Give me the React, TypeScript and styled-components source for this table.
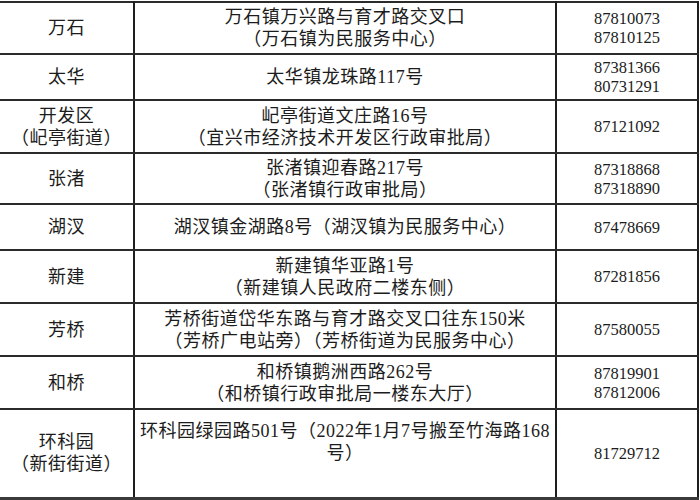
import * as React from "react";
import styled, { createGlobalStyle } from "styled-components";

type Office = {
  name: string[];
  address: string[];
  phones: string[];
  height: number;
  extraLine?: boolean;
};

const OFFICES: Office[] = [
  {
    name: ["万石"],
    address: ["万石镇万兴路与育才路交叉口", "（万石镇为民服务中心）"],
    phones: ["87810073", "87810125"],
    height: 52,
  },
  {
    name: ["太华"],
    address: ["太华镇龙珠路117号"],
    phones: ["87381366", "80731291"],
    height: 46,
  },
  {
    name: ["开发区", "（屺亭街道）"],
    address: ["屺亭街道文庄路16号", "（宜兴市经济技术开发区行政审批局）"],
    phones: ["87121092"],
    height: 53,
  },
  {
    name: ["张渚"],
    address: ["张渚镇迎春路217号", "（张渚镇行政审批局）"],
    phones: ["87318868", "87318890"],
    height: 51,
  },
  {
    name: ["湖汊"],
    address: ["湖汊镇金湖路8号（湖汊镇为民服务中心）"],
    phones: ["87478669"],
    height: 46,
  },
  {
    name: ["新建"],
    address: ["新建镇华亚路1号", "（新建镇人民政府二楼东侧）"],
    phones: ["87281856"],
    height: 53,
  },
  {
    name: ["芳桥"],
    address: ["芳桥街道岱华东路与育才路交叉口往东150米", "（芳桥广电站旁）（芳桥街道为民服务中心）"],
    phones: ["87580055"],
    height: 53,
  },
  {
    name: ["和桥"],
    address: ["和桥镇鹅洲西路262号", "（和桥镇行政审批局一楼东大厅）"],
    phones: ["87819901", "87812006"],
    height: 53,
  },
  {
    name: ["环科园", "（新街街道）"],
    address: ["环科园绿园路501号（2022年1月7号搬至竹海路168", "号）"],
    phones: ["81729712"],
    height: 89,
    extraLine: true,
  },
];

const GlobalStyle = createGlobalStyle`
  html, body {
    margin: 0;
    padding: 0;
    background: #ffffff;
  }
  body {
    width: 700px;
    height: 500px;
    overflow: hidden;
    font-family: "Liberation Serif", "Noto Sans CJK SC", serif;
    color: #1c1c1c;
  }
`;

const Page = styled.div`
  padding-top: 1px;
`;

const Sheet = styled.table`
  width: 698px;
  border-collapse: collapse;
  table-layout: fixed;
`;

const Row = styled.tr<{ $h: number }>`
  height: ${(p) => p.$h}px;
`;

const Cell = styled.td<{ $kind: "name" | "addr" | "tel"; $extraLine?: boolean }>`
  padding: 0 0 ${(p) => (p.$extraLine ? 22 : 0)}px 0;
  text-align: center;
  vertical-align: middle;
  border-top: 2px solid #2b2b2b;
  border-bottom: 2px solid #2b2b2b;
  border-left: ${(p) => (p.$kind === "name" ? "none" : "2px solid #1e1e1e")};
  border-right: 2px solid #1e1e1e;
  font-size: ${(p) => (p.$kind === "tel" ? 16.5 : 18)}px;
  line-height: ${(p) => (p.$kind === "tel" ? 19 : 22)}px;
  letter-spacing: ${(p) => (p.$kind === "tel" ? 0 : 0.5)}px;
  white-space: nowrap;
`;

const LastRow = styled(Row)`
  td {
    border-bottom: 3px solid #3a3a3a;
  }
`;

const Line = styled.span`
  display: block;
`;

const Lines = ({ items }: { items: string[] }) => (
  <>
    {items.map((t) => (
      <Line key={t}>{t}</Line>
    ))}
  </>
);

export default function App() {
  return (
    <>
      <GlobalStyle />
      <Page>
        <Sheet>
          <colgroup>
            <col style={{ width: 134 }} />
            <col style={{ width: 422 }} />
            <col style={{ width: 142 }} />
          </colgroup>
          <tbody>
            {OFFICES.map((o, i) => {
              const R = i === OFFICES.length - 1 ? LastRow : Row;
              return (
                <R key={o.name[0]} $h={o.height}>
                  <Cell $kind="name">
                    <Lines items={o.name} />
                  </Cell>
                  <Cell $kind="addr" $extraLine={o.extraLine}>
                    <Lines items={o.address} />
                  </Cell>
                  <Cell $kind="tel">
                    <Lines items={o.phones} />
                  </Cell>
                </R>
              );
            })}
          </tbody>
        </Sheet>
      </Page>
    </>
  );
}
